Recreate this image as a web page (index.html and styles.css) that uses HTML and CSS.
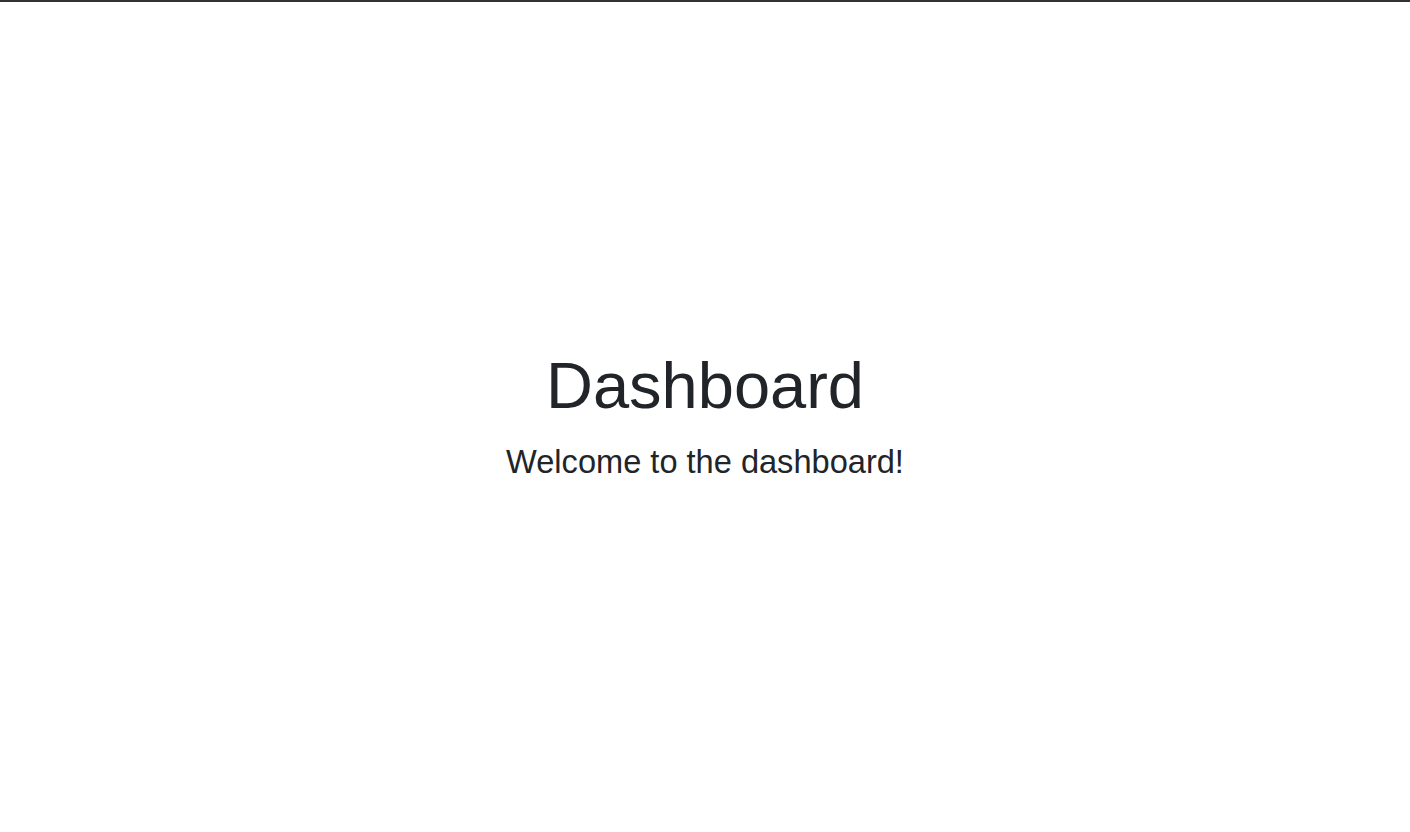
FILE: index.html
```html
<!DOCTYPE html>
<html lang="en">
<head>
<meta charset="utf-8">
<title>Dashboard</title>
<link rel="stylesheet" href="styles.css">
</head>
<body>
<main class="page">
  <h1 class="title">Dashboard</h1>
  <p class="lead">Welcome to the dashboard!</p>
</main>
</body>
</html>
```
FILE: styles.css
```css
* { box-sizing: border-box; }
html, body { margin: 0; padding: 0; }
body {
  font-family: "Liberation Sans", Arial, sans-serif;
  color: #212529;
  background: #fff;
  border-top: 2px solid #333333;
}
.page {
  height: calc(100vh - 2px);
  display: flex;
  flex-direction: column;
  align-items: center;
  justify-content: center;
  text-align: center;
}
.title {
  margin: 0 0 13px;
  font-size: 65px;
  font-weight: 400;
  line-height: 1.2;
}
.lead {
  margin: 0;
  font-size: 32.6px;
  line-height: 1.5;
}
```
